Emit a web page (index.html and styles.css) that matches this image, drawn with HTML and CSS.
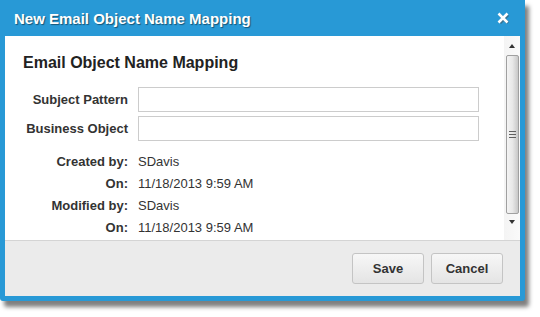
FILE: index.html
```html
<!DOCTYPE html>
<html>
<head>
<meta charset="utf-8">
<link rel="stylesheet" href="styles.css">
</head>
<body>
<div class="dialog">
  <div class="titlebar">
    <span class="title">New Email Object Name Mapping</span>
    <svg class="close" width="13" height="13" viewBox="0 0 13 13"><path d="M2 2 L10 10 M10 2 L2 10" stroke="#4a4a4a" stroke-opacity="0.5" stroke-width="3" transform="translate(1 1)"/><path d="M1.5 1.5 L10.5 10.5 M10.5 1.5 L1.5 10.5" stroke="#ffffff" stroke-width="2.6"/></svg>
  </div>
  <div class="body">
    <div class="content">
      <h2 class="heading">Email Object Name Mapping</h2>
      <div class="form">
        <label class="label">Subject Pattern</label>
        <input class="input" type="text">
        <label class="label">Business Object</label>
        <input class="input" type="text">
      </div>
      <div class="info">
        <span class="ilabel">Created by:</span><span class="ivalue">SDavis</span>
        <span class="ilabel">On:</span><span class="ivalue">11/18/2013 9:59 AM</span>
        <span class="ilabel">Modified by:</span><span class="ivalue">SDavis</span>
        <span class="ilabel">On:</span><span class="ivalue">11/18/2013 9:59 AM</span>
      </div>
    </div>
    <div class="scrollbar">
      <div class="arrow up"></div>
      <div class="thumb"><div class="grip"><i></i><i></i><i></i></div></div>
      <div class="arrow down"></div>
    </div>
  </div>
  <div class="footer">
    <button class="btn">Save</button>
    <button class="btn">Cancel</button>
  </div>
</div>
</body>
</html>
```
FILE: styles.css
```css
html, body {
  margin: 0;
  padding: 0;
  background: #ffffff;
}
body {
  font-family: Arial, "Liberation Sans", sans-serif;
  color: #333333;
  width: 540px;
  height: 317px;
  overflow: hidden;
}
.dialog {
  width: 525px;
  height: 301px;
  box-sizing: border-box;
  background: #2899d6;
  padding: 0 5px 5px 5px;
  display: flex;
  flex-direction: column;
  border-radius: 0 0 3px 3px;
  box-shadow: 4px 6px 4px rgba(0, 0, 0, 0.5);
}
.titlebar {
  height: 36px;
  display: flex;
  align-items: center;
  justify-content: space-between;
  padding: 0 10px 0 9px;
  color: #ffffff;
}
.title {
  font-size: 15px;
  font-weight: bold;
  text-shadow: 1px 1px 1px rgba(0, 0, 0, 0.45);
  padding-top: 1px;
}
.close {
  display: block;
  margin-top: 1px;
}
.body {
  height: 204px;
  background: #ffffff;
  display: flex;
  border-bottom: 1px solid #d4d4d4;
}
.content {
  flex: 1;
  padding: 18px 0 0 18px;
}
.heading {
  margin: 0;
  font-size: 16px;
  font-weight: bold;
  color: #222222;
  line-height: 18px;
}
.form {
  margin-top: 15px;
  display: grid;
  grid-template-columns: 105px 341px;
  column-gap: 10px;
  row-gap: 4px;
  align-items: center;
}
.label {
  text-align: right;
  font-size: 13px;
  font-weight: bold;
  color: #333333;
}
.input {
  box-sizing: border-box;
  height: 25px;
  width: 341px;
  border: 1px solid #cccccc;
  margin: 0;
  padding: 0 4px;
  font: 13px Arial, "Liberation Sans", sans-serif;
}
.info {
  margin-top: 9px;
  display: grid;
  grid-template-columns: 105px auto;
  column-gap: 10px;
  grid-auto-rows: 22px;
  align-items: center;
  font-size: 13px;
}
.ilabel {
  text-align: right;
  font-weight: bold;
}
.ivalue {
  color: #333333;
}
.scrollbar {
  width: 16px;
  background: linear-gradient(to right, #f4f4f4, #fafafa);
  display: flex;
  flex-direction: column;
  align-items: center;
}
.arrow {
  height: 17px;
  width: 16px;
  position: relative;
}
.arrow::after {
  content: "";
  position: absolute;
  left: 5px;
  width: 0;
  height: 0;
  border-left: 3.5px solid transparent;
  border-right: 3.5px solid transparent;
}
.arrow.up::after {
  top: 8px;
  border-bottom: 4px solid #333333;
}
.arrow.down::after {
  top: 6px;
  border-top: 4px solid #333333;
}
.thumb {
  width: 13px;
  box-sizing: border-box;
  height: 159px;
  border: 1px solid #a0a0a0;
  border-radius: 2px;
  background: linear-gradient(to right, #f4f4f4 0%, #e8e8e8 50%, #c8c8c8 100%);
  display: flex;
  align-items: center;
  justify-content: center;
  margin-top: 2px;
}
.grip {
  display: flex;
  flex-direction: column;
  gap: 2px;
}
.grip i {
  display: block;
  width: 7px;
  height: 1px;
  background: #606060;
}
.footer {
  flex: 1;
  background: #ebebeb;
  display: flex;
  justify-content: flex-end;
  align-items: flex-start;
  gap: 7px;
  padding: 12px 17px 0 0;
}
.btn {
  width: 72px;
  height: 31px;
  box-sizing: border-box;
  border: 1px solid #c4c4c4;
  border-radius: 3px;
  background: linear-gradient(to bottom, #f7f7f7, #e4e4e4);
  font: bold 13px Arial, "Liberation Sans", sans-serif;
  color: #333333;
  padding: 0;
}
```
